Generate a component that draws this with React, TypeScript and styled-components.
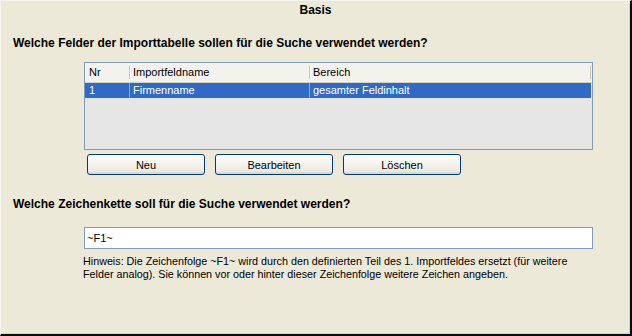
import styled, { createGlobalStyle } from "styled-components";

const GlobalStyle = createGlobalStyle`
  html, body {
    margin: 0;
    padding: 0;
    background: #ece9d8;
  }
  * {
    box-sizing: border-box;
  }
`;

const Panel = styled.div`
  width: 632px;
  height: 336px;
  background: #ece9d8;
  border-top: 1px solid #f4f3ee;
  border-left: 1px solid #f4f3ee;
  border-right: 2px solid #0a0a0a;
  border-bottom: 2px solid #0a0a0a;
  box-shadow: inset -1px -1px 0 #d8d4c6;
  font-family: "Liberation Sans", Arial, sans-serif;
  font-size: 11px;
  color: #000;
  display: flex;
  flex-direction: column;
`;

const Title = styled.div`
  margin-top: 2px;
  text-align: center;
  font-weight: bold;
  font-size: 12px;
  line-height: 14px;
`;

const Heading = styled.div<{ top: number }>`
  margin-top: ${(p) => p.top}px;
  padding-left: 12px;
  font-weight: bold;
  font-size: 12px;
  line-height: 14px;
`;

const Indent = styled.div<{ top: number; left: number }>`
  margin-top: ${(p) => p.top}px;
  margin-left: ${(p) => p.left}px;
`;

const ListView = styled.div`
  width: 509px;
  height: 88px;
  border: 1px solid #7f9db9;
  background: #e6e6e6;
  display: flex;
  flex-direction: column;
`;

const cols = "44px 180px 1fr";

const HeaderRow = styled.div`
  display: grid;
  grid-template-columns: ${cols};
  height: 20px;
  background: #f3f2ec;
  border-bottom: 1px solid #d6d2c2;
  box-shadow: 0 1px 0 #e2decd;
`;

const HeaderCell = styled.div`
  position: relative;
  padding-left: 4px;
  line-height: 19px;
  &:not(:first-child)::before {
    content: "";
    position: absolute;
    left: 0;
    top: 3px;
    bottom: 3px;
    width: 1px;
    background: #c7c5b2;
    box-shadow: 1px 0 0 #fff;
  }
  &:last-child::after {
    content: "";
    position: absolute;
    right: 1px;
    top: 3px;
    bottom: 3px;
    width: 1px;
    background: #c7c5b2;
  }
`;

const DataRow = styled.div<{ selected?: boolean }>`
  display: grid;
  grid-template-columns: ${cols};
  height: 15px;
  margin: 0 1px 0 0;
  background: ${(p) => (p.selected ? "#316ac5" : "transparent")};
  color: ${(p) => (p.selected ? "#fff" : "#000")};
`;

const DataCell = styled.div`
  position: relative;
  padding-left: 4px;
  line-height: 15px;
  white-space: nowrap;
  &:not(:first-child)::before {
    content: "";
    position: absolute;
    left: 0;
    top: 0;
    bottom: 0;
    width: 1px;
    background: #8aa9dc;
  }
`;

const ButtonRow = styled.div`
  display: flex;
  gap: 10px;
  margin-top: 4px;
  margin-left: 86px;
`;

const Button = styled.button`
  width: 118px;
  height: 21px;
  border: 1px solid #003c74;
  border-radius: 3px;
  background: linear-gradient(180deg, #ffffff 0%, #f6f5f0 40%, #ebe9e0 85%, #d6d0c5 100%);
  font-family: "Liberation Sans", Arial, sans-serif;
  font-size: 11px;
  color: #000;
  padding: 1px 0 0;
  line-height: 19px;
`;

const TextInput = styled.input`
  width: 509px;
  height: 22px;
  border: 1px solid #7f9db9;
  background: #fff;
  padding: 0 2px;
  font-family: "Liberation Sans", Arial, sans-serif;
  font-size: 11px;
  color: #000;
  outline: none;
`;

const Hint = styled.div`
  margin-top: 6px;
  margin-left: 82px;
  line-height: 13px;
  font-size: 10.75px;
  white-space: nowrap;
`;

const rows = [{ nr: "1", name: "Firmenname", range: "gesamter Feldinhalt" }];

function App() {
  return (
    <>
      <GlobalStyle />
      <Panel>
        <Title>Basis</Title>
        <Heading top={19}>
          Welche Felder der Importtabelle sollen für die Suche verwendet werden?
        </Heading>
        <Indent top={12} left={83}>
          <ListView>
            <HeaderRow>
              <HeaderCell>Nr</HeaderCell>
              <HeaderCell>Importfeldname</HeaderCell>
              <HeaderCell>Bereich</HeaderCell>
            </HeaderRow>
            {rows.map((r) => (
              <DataRow key={r.nr} selected>
                <DataCell>{r.nr}</DataCell>
                <DataCell>{r.name}</DataCell>
                <DataCell>{r.range}</DataCell>
              </DataRow>
            ))}
          </ListView>
        </Indent>
        <ButtonRow>
          <Button>Neu</Button>
          <Button>Bearbeiten</Button>
          <Button>Löschen</Button>
        </ButtonRow>
        <Heading top={22}>
          Welche Zeichenkette soll für die Suche verwendet werden?
        </Heading>
        <Indent top={16} left={83}>
          <TextInput defaultValue="~F1~" />
        </Indent>
        <Hint>
          Hinweis: Die Zeichenfolge ~F1~ wird durch den definierten Teil des 1. Importfeldes ersetzt (für weitere
          <br />
          Felder analog). Sie können vor oder hinter dieser Zeichenfolge weitere Zeichen angeben.
        </Hint>
      </Panel>
    </>
  );
}

export default App;
